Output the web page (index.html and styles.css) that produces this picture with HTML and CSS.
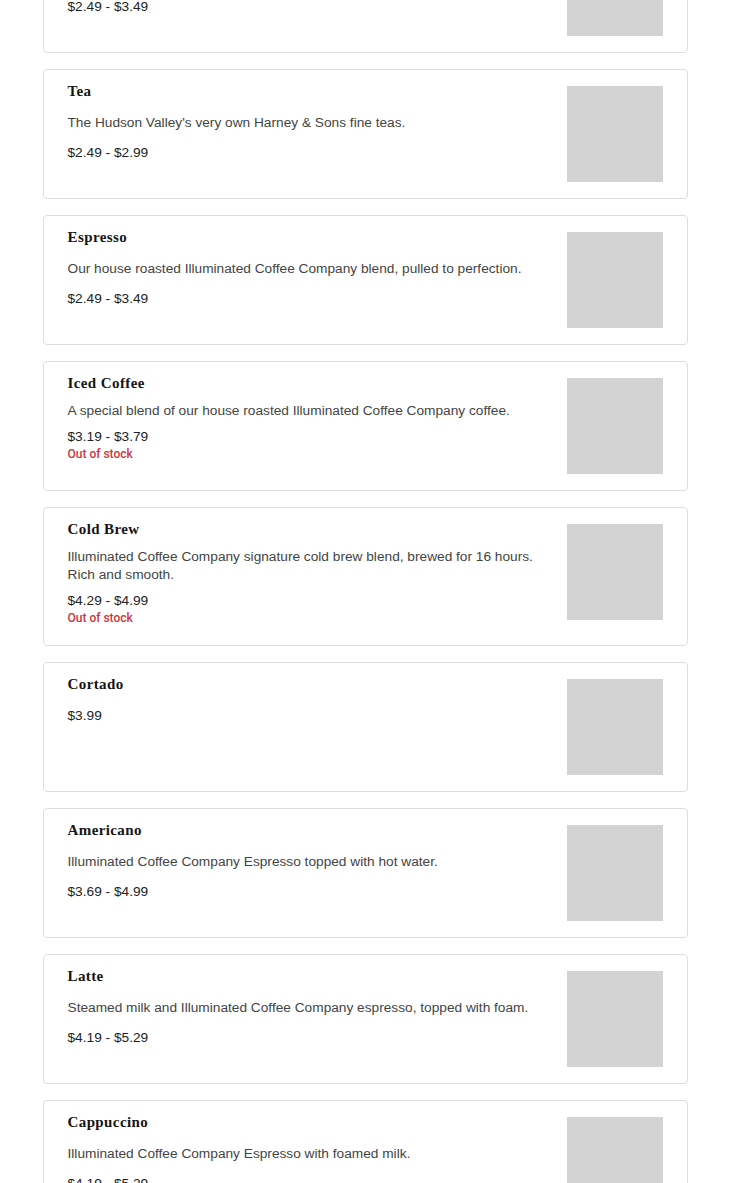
FILE: index.html
```html
<!DOCTYPE html>
<html lang="en">
<head>
<meta charset="utf-8">
<title>Menu</title>
<link rel="stylesheet" href="styles.css">
</head>
<body>
<main class="menu">
  <article class="item">
    <div class="info">
      <h3 class="name">Drip Coffee</h3>
      <p class="desc">Our house roasted Illuminated Coffee Company drip coffee.</p>
      <p class="price">$2.49 - $3.49</p>
    </div>
    <div class="thumb"></div>
  </article>
  <article class="item">
    <div class="info">
      <h3 class="name">Tea</h3>
      <p class="desc">The Hudson Valley's very own Harney &amp; Sons fine teas.</p>
      <p class="price">$2.49 - $2.99</p>
    </div>
    <div class="thumb"></div>
  </article>
  <article class="item">
    <div class="info">
      <h3 class="name">Espresso</h3>
      <p class="desc">Our house roasted Illuminated Coffee Company blend, pulled to perfection.</p>
      <p class="price">$2.49 - $3.49</p>
    </div>
    <div class="thumb"></div>
  </article>
  <article class="item item--out">
    <div class="info">
      <h3 class="name">Iced Coffee</h3>
      <p class="desc">A special blend of our house roasted Illuminated Coffee Company coffee.</p>
      <p class="price">$3.19 - $3.79</p>
      <p class="stock">Out of stock</p>
    </div>
    <div class="thumb"></div>
  </article>
  <article class="item item--out">
    <div class="info">
      <h3 class="name">Cold Brew</h3>
      <p class="desc">Illuminated Coffee Company signature cold brew blend, brewed for 16 hours. Rich and smooth.</p>
      <p class="price">$4.29 - $4.99</p>
      <p class="stock">Out of stock</p>
    </div>
    <div class="thumb"></div>
  </article>
  <article class="item">
    <div class="info">
      <h3 class="name">Cortado</h3>
      <p class="price">$3.99</p>
    </div>
    <div class="thumb"></div>
  </article>
  <article class="item">
    <div class="info">
      <h3 class="name">Americano</h3>
      <p class="desc">Illuminated Coffee Company Espresso topped with hot water.</p>
      <p class="price">$3.69 - $4.99</p>
    </div>
    <div class="thumb"></div>
  </article>
  <article class="item">
    <div class="info">
      <h3 class="name">Latte</h3>
      <p class="desc">Steamed milk and Illuminated Coffee Company espresso, topped with foam.</p>
      <p class="price">$4.19 - $5.29</p>
    </div>
    <div class="thumb"></div>
  </article>
  <article class="item">
    <div class="info">
      <h3 class="name">Cappuccino</h3>
      <p class="desc">Illuminated Coffee Company Espresso with foamed milk.</p>
      <p class="price">$4.19 - $5.29</p>
    </div>
    <div class="thumb"></div>
  </article>
  <article class="item">
    <div class="info">
      <h3 class="name">Mocha</h3>
      <p class="desc">Illuminated Coffee Company espresso with chocolate and steamed milk.</p>
      <p class="price">$4.49 - $5.49</p>
    </div>
    <div class="thumb"></div>
  </article>
</main>
</body>
</html>
```

FILE: styles.css
```css
html, body {
  margin: 0;
  padding: 0;
  background: #ffffff;
}

body {
  font-family: "Liberation Sans", Arial, sans-serif;
  color: #222222;
}

.menu {
  width: 645px;
  margin: -77px auto 0;
  display: flex;
  flex-direction: column;
  gap: 16px;
}

.item {
  display: flex;
  align-items: flex-start;
  gap: 24px;
  border: 1px solid #dddddd;
  border-radius: 4px;
  padding: 12px 24px 16px;
}

.info {
  flex: 1;
  min-width: 0;
  display: flex;
  flex-direction: column;
  gap: 12px;
}

.item--out .info {
  gap: 8px;
}

.name {
  margin: 0 0 2px;
  font-family: "Liberation Serif", "Times New Roman", serif;
  font-weight: bold;
  font-size: 15px;
  line-height: 18px;
  color: #151515;
  letter-spacing: 0.4px;
}

.desc {
  margin: 0;
  font-size: 13.7px;
  line-height: 18px;
  color: #444444;
}

.price {
  margin: 0;
  font-size: 13.7px;
  line-height: 18px;
  color: #222222;
}

.stock {
  margin: -9px 0 2px;
  font-family: Roboto, "Liberation Sans", sans-serif;
  font-weight: 500;
  font-size: 12px;
  line-height: 18px;
  color: #d0343c;
}

.thumb {
  flex: none;
  width: 96px;
  height: 96px;
  margin-top: 4px;
  background: #d3d3d3;
}
```
